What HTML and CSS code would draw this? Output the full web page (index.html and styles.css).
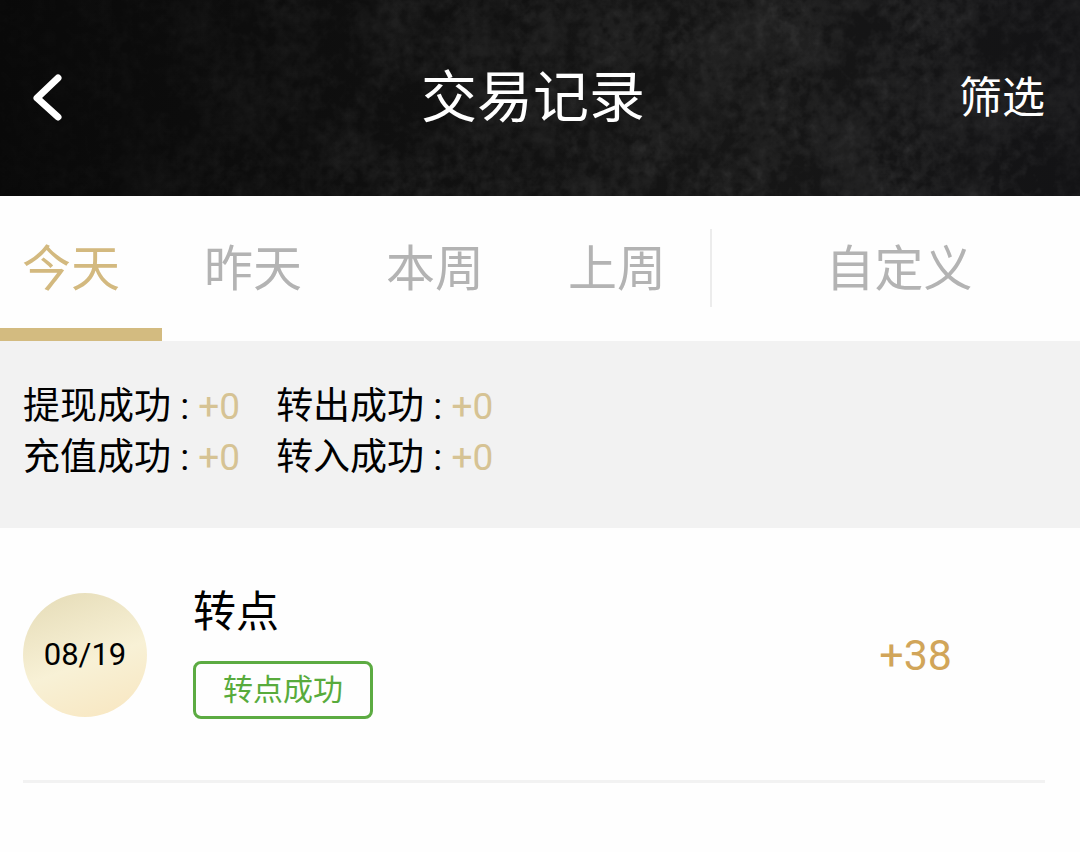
FILE: index.html
```html
<!DOCTYPE html>
<html lang="zh-CN">
<head>
    <meta charset="UTF-8">
    <meta name="viewport" content="width=device-width, initial-scale=1.0">
    <title>交易记录</title>
    <link rel="stylesheet" href="styles.css">
</head>
<body>
    <header class="header">
        <svg class="header-bg" viewBox="0 0 1080 196" preserveAspectRatio="none" aria-hidden="true">
            <defs>
                <filter id="stone" x="0" y="0" width="100%" height="100%" color-interpolation-filters="sRGB">
                    <feTurbulence type="fractalNoise" baseFrequency="0.016 0.014" numOctaves="2" seed="21" result="clouds"/>
                    <feTurbulence type="fractalNoise" baseFrequency="0.09" numOctaves="3" seed="4" result="grain"/>
                    <feComposite in="clouds" in2="grain" operator="arithmetic" k2="0.5" k3="0.5"/>
                    <feColorMatrix values="0 0 0 0 1  0 0 0 0 1  0 0 0 0 1  0.24 0 0 0 -0.085"/>
                </filter>
                <linearGradient id="shade" x1="0" y1="0" x2="1" y2="0">
                    <stop offset="0" stop-color="#090909"/>
                    <stop offset="0.4" stop-color="#101010"/>
                    <stop offset="0.7" stop-color="#161616"/>
                    <stop offset="1" stop-color="#131315"/>
                </linearGradient>
                <linearGradient id="fade" x1="0" y1="0" x2="1" y2="0">
                    <stop offset="0" stop-color="#222"/>
                    <stop offset="0.5" stop-color="#ddd"/>
                    <stop offset="0.85" stop-color="#fff"/>
                    <stop offset="1" stop-color="#999"/>
                </linearGradient>
                <mask id="stone-mask">
                    <rect width="1080" height="196" fill="url(#fade)"/>
                </mask>
            </defs>
            <rect width="1080" height="196" fill="url(#shade)"/>
            <g mask="url(#stone-mask)">
                <rect width="1080" height="196" filter="url(#stone)"/>
            </g>
        </svg>
        <button class="back" type="button" aria-label="返回">
            <svg width="50" height="50" viewBox="0 0 50 50" aria-hidden="true">
                <path d="M37 5 L16 25 L37 44"/>
            </svg>
        </button>
        <h1 class="title">交易记录</h1>
        <button class="filter" type="button">筛选</button>
    </header>

    <nav class="tabs">
        <button class="tab active" type="button">今天</button>
        <button class="tab" type="button">昨天</button>
        <button class="tab" type="button">本周</button>
        <button class="tab" type="button">上周</button>
        <button class="tab custom" type="button">自定义</button>
    </nav>

    <section class="summary">
        <div>提现成功 : <span class="value">+0</span></div>
        <div>转出成功 : <span class="value">+0</span></div>
        <div>充值成功 : <span class="value">+0</span></div>
        <div>转入成功 : <span class="value">+0</span></div>
    </section>

    <main class="records">
        <article class="record">
            <time class="date">08/19</time>
            <div class="info">
                <h2 class="name">转点</h2>
                <span class="status">转点成功</span>
            </div>
            <span class="amount">+38</span>
        </article>
    </main>
</body>
</html>
```
FILE: styles.css
```css
* {
    box-sizing: border-box;
}
body {
    margin: 0;
    background: #fefefe;
    color: #000;
    font-family: Roboto, "Noto Sans CJK SC", sans-serif;
}
button {
    padding: 0;
    border: 0;
    background: none;
    color: inherit;
    font-family: inherit;
    cursor: pointer;
}
h1, h2 {
    margin: 0;
    font-weight: 400;
}

/* header */
.header {
    position: relative;
    display: grid;
    grid-template-columns: 1fr auto 1fr;
    align-items: center;
    padding: 58px 35px 58px 21px;
    background: #111;
    color: #fff;
}
.header-bg {
    position: absolute;
    inset: 0;
    width: 100%;
    height: 100%;
}
.back, .title, .filter {
    position: relative;
}
.back {
    justify-self: start;
    display: flex;
}
.back path {
    fill: none;
    stroke: #fff;
    stroke-width: 7;
    stroke-linecap: round;
    stroke-linejoin: round;
}
.title {
    font-size: 56px;
    line-height: 80px;
}
.filter {
    justify-self: end;
    font-size: 43px;
    line-height: 80px;
}

/* date tabs */
.tabs {
    display: flex;
    gap: 20px;
}
.tab {
    padding: 38px 42px 22px 22px;
    border-bottom: 13px solid transparent;
    color: #b3b3b3;
    font-size: 49px;
    line-height: 72px;
    white-space: nowrap;
}
.tab.active {
    border-color: #d3bb80;
    color: #d3b97f;
}
.custom {
    position: relative;
    flex: 1;
    padding-left: 22px;
    padding-right: 32px;
}
.custom::before {
    content: "";
    position: absolute;
    left: -18px;
    top: 33px;
    width: 2px;
    height: 78px;
    background: #ececec;
}

/* totals */
.summary {
    display: grid;
    grid-template-columns: auto auto;
    justify-content: start;
    column-gap: 36px;
    padding: 40px 23px 45px;
    background: #f2f2f2;
    font-size: 37px;
    line-height: 51px;
}
.value {
    color: #d6c394;
}

/* records */
.records {
    padding: 0 35px 0 23px;
}
.record {
    display: flex;
    align-items: center;
    padding: 62px 93px 61px 0;
    border-bottom: 3px solid #f2f2f2;
}
.date {
    display: flex;
    align-items: center;
    justify-content: center;
    width: 124px;
    height: 124px;
    border-radius: 50%;
    background: linear-gradient(160deg, #e8dfbc 10%, #f8f1d6 55%, #f8e8c4 90%);
    font-size: 31px;
}
.info {
    flex: 1;
    margin-left: 46px;
}
.name {
    margin-bottom: 26px;
    font-size: 43px;
    line-height: 45px;
}
.status {
    display: inline-block;
    padding: 0 27px;
    border: 3px solid #5cab42;
    border-radius: 8px;
    color: #58ab3c;
    font-size: 30px;
    line-height: 52px;
    vertical-align: top;
}
.amount {
    color: #d1a559;
    font-size: 43px;
}
```
